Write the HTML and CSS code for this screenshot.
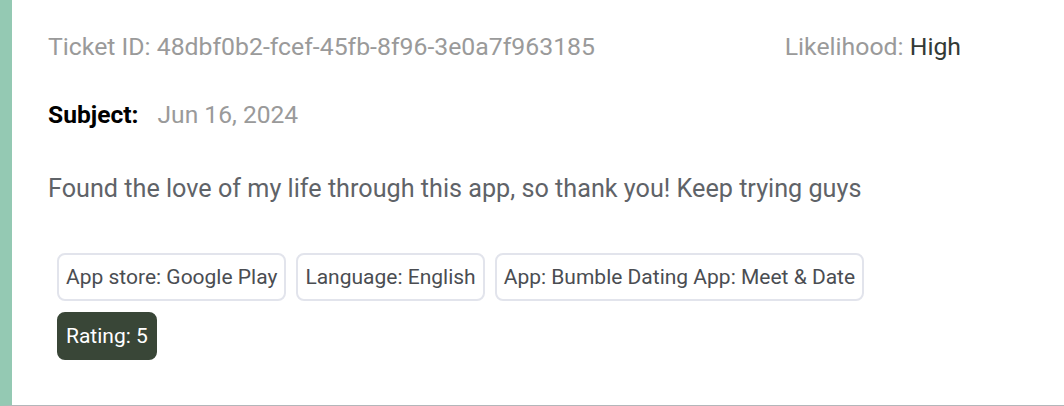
FILE: index.html
```html
<!DOCTYPE html>
<html>
<head>
<meta charset="utf-8">
<link rel="stylesheet" href="styles.css">
</head>
<body>
<div class="card">
  <div class="top-row">
    <div class="ticket-id">Ticket ID: 48dbf0b2-fcef-45fb-8f96-3e0a7f963185</div>
    <div class="likelihood">Likelihood: <span class="value">High</span></div>
  </div>
  <div class="subject-row">
    <span class="subject-label">Subject:</span>
    <span class="date">Jun 16, 2024</span>
  </div>
  <div class="body-text">Found the love of my life through this app, so thank you! Keep trying guys</div>
  <div class="chips">
    <span class="chip">App store: Google Play</span>
    <span class="chip">Language: English</span>
    <span class="chip">App: Bumble Dating App: Meet &amp; Date</span>
    <span class="chip chip-dark">Rating: 5</span>
  </div>
</div>
</body>
</html>
```
FILE: styles.css
```css
* { box-sizing: border-box; }
html, body { margin: 0; padding: 0; background: #fff; }
body { font-family: Roboto, "Liberation Sans", sans-serif; }
.card {
  height: 406px;
  border-left: 12px solid #94c9b3;
  border-bottom: 1px solid #b3b6ba;
  padding: 32px 103px 0 36px;
}
.top-row {
  display: flex;
  justify-content: space-between;
  font-size: 24.8px;
  line-height: 30px;
  color: #9a9a9a;
}
.likelihood .value { color: #333a36; }
.subject-row {
  margin-top: 38px;
  font-size: 24.6px;
  line-height: 30px;
  display: flex;
  gap: 19px;
}
.subject-label { font-weight: 700; color: #000; }
.date { color: #9a9a9a; }
.body-text {
  margin-top: 44px;
  font-size: 25.2px;
  line-height: 30px;
  color: #5f6368;
}
.chips {
  margin-top: 49px;
  margin-left: 9px;
  display: flex;
  flex-wrap: wrap;
  gap: 11px 10px;
  max-width: 860px;
}
.chip {
  display: inline-block;
  border: 2px solid #e2e4ec;
  border-radius: 8px;
  padding: 10px 7px;
  font-size: 21px;
  line-height: 24px;
  color: #4a4d52;
}
.chip-dark {
  background: #394637;
  border-color: #394637;
  color: #fff;
}
```
